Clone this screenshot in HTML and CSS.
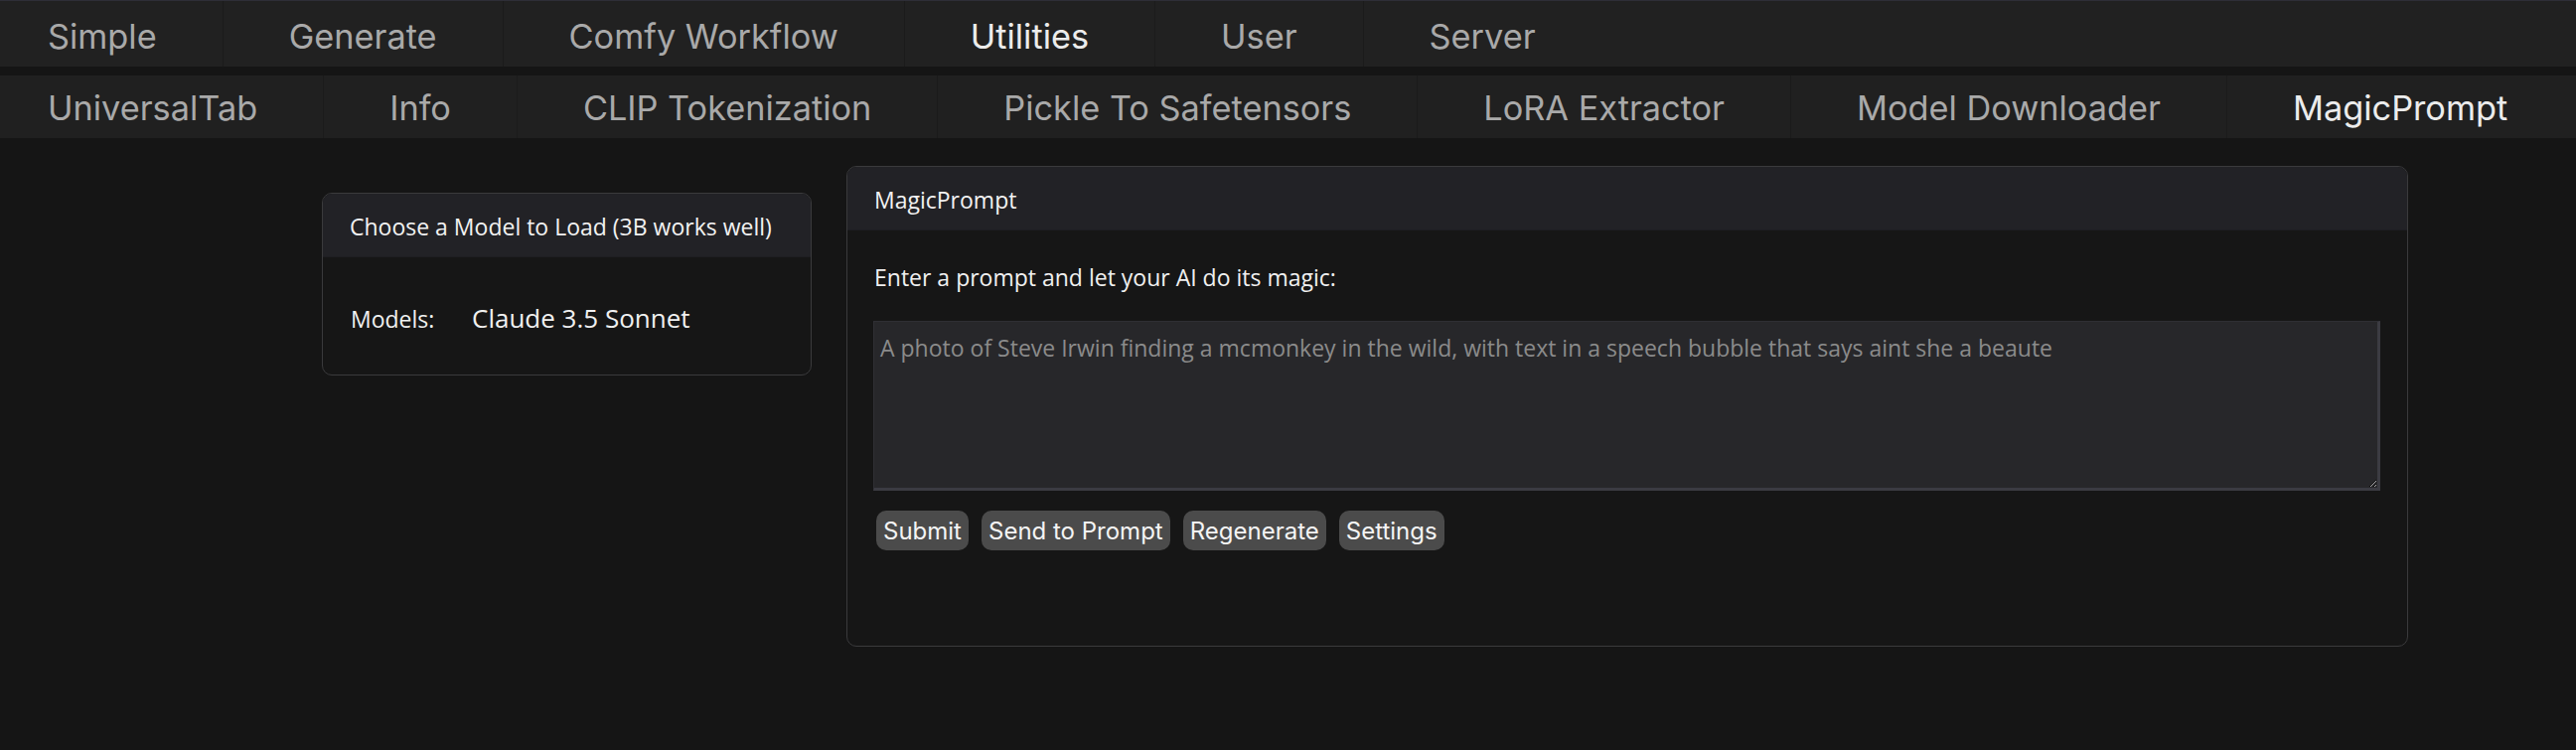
FILE: index.html
```html
<!DOCTYPE html>
<html lang="en">
<head>
<meta charset="utf-8">
<title>MagicPrompt</title>
<link rel="stylesheet" href="styles.css">
</head>
<body>
<nav class="tabs tabs-top">
  <a class="tab first">Simple</a>
  <a class="tab">Generate</a>
  <a class="tab">Comfy Workflow</a>
  <a class="tab active">Utilities</a>
  <a class="tab">User</a>
  <a class="tab last">Server</a>
</nav>
<nav class="tabs tabs-sub">
  <a class="tab first">UniversalTab</a>
  <a class="tab">Info</a>
  <a class="tab">CLIP Tokenization</a>
  <a class="tab">Pickle To Safetensors</a>
  <a class="tab">LoRA Extractor</a>
  <a class="tab">Model Downloader</a>
  <a class="tab active last">MagicPrompt</a>
</nav>
<main class="content">
  <section class="card model-card">
    <div class="card-header">Choose a Model to Load (3B works well)</div>
    <div class="card-body model-body">
      <span class="models-label">Models:</span>
      <span class="models-value">Claude 3.5 Sonnet</span>
    </div>
  </section>
  <section class="card prompt-card">
    <div class="card-header">MagicPrompt</div>
    <div class="card-body prompt-body">
      <p class="prompt-label">Enter a prompt and let your AI do its magic:</p>
      <textarea class="prompt-input" placeholder="A photo of Steve Irwin finding a mcmonkey in the wild, with text in a speech bubble that says aint she a beaute"></textarea>
      <div class="buttons">
        <button class="btn">Submit</button>
        <button class="btn">Send to Prompt</button>
        <button class="btn">Regenerate</button>
        <button class="btn">Settings</button>
      </div>
    </div>
  </section>
</main>
</body>
</html>
```
FILE: styles.css
```css
html, body {
  margin: 0;
  padding: 0;
}
body {
  background: #151515;
  color: #f0f0f0;
  font-family: "Open Sans", "Noto Sans", sans-serif;
  width: 2593px;
  height: 755px;
  overflow: hidden;
}
.tabs {
  display: flex;
  background: #212121;
  font-family: Inter, Roboto, sans-serif;
  font-size: 34.3px;
  box-sizing: border-box;
}
.tabs-top {
  border-top: 1px solid #2e2e37;
  height: 67px;
}
.tabs-sub {
  margin-top: 9px;
  height: 63px;
  background: #202020;
}
.tab {
  display: flex;
  align-items: center;
  padding: 0 66px;
  color: #a9a9a9;
  border-right: 1px solid #1b1b1b;
  white-space: nowrap;
}
.tabs-top .tab {
  padding-top: 5px;
}
.tabs-sub .tab {
  padding-top: 2px;
}
.tab.first {
  padding-left: 48px;
}
.tab.last {
  border-right: none;
}
.tab.active {
  color: #ececec;
}
.content {
  display: grid;
  grid-template-columns: 493px 1572px;
  column-gap: 35px;
  align-items: start;
  padding-left: 324px;
  padding-top: 28px;
}
.card {
  border: 1px solid #3a3a3c;
  border-radius: 10px;
  overflow: hidden;
  background: #161616;
}
.card-header {
  background: #222226;
  box-sizing: border-box;
  height: 64px;
  display: flex;
  align-items: center;
  padding: 3px 27px 0;
  font-size: 23px;
  color: #f2f2f2;
  border-bottom: 1px solid #1e1e22;
}
.model-card {
  margin-top: 27px;
  height: 182px;
}
.model-body {
  display: flex;
  align-items: baseline;
  padding: 43px 28px 0;
}
.models-label {
  font-size: 23px;
  width: 122px;
}
.models-value {
  font-size: 26px;
}
.prompt-card {
  height: 482px;
}
.prompt-body {
  padding: 0 27px;
}
.prompt-label {
  margin: 32px 0 0;
  font-size: 23px;
  line-height: 30px;
}
.prompt-input {
  display: block;
  box-sizing: border-box;
  width: 1517px;
  height: 171px;
  margin: 29px 0 0 -1px;
  background: #27272a;
  border: 1px solid #2f2f34;
  border-right: 3px solid #3b3b42;
  border-bottom: 3px solid #3b3b42;
  border-radius: 0;
  color: #d0d0d0;
  font-family: "Open Sans", "Noto Sans", sans-serif;
  font-size: 23px;
  padding: 10px 6px 6px;
  resize: both;
  outline: none;
}
.prompt-input::placeholder {
  color: #8b8b8b;
}
.buttons {
  display: flex;
  gap: 13px;
  margin: 20px 0 0 2px;
}
.btn {
  height: 40px;
  padding: 0 7px;
  background: #4b4b4b;
  color: #f4f4f4;
  border: none;
  border-radius: 10px;
  font-family: Inter, Roboto, sans-serif;
  font-size: 24px;
}
```
